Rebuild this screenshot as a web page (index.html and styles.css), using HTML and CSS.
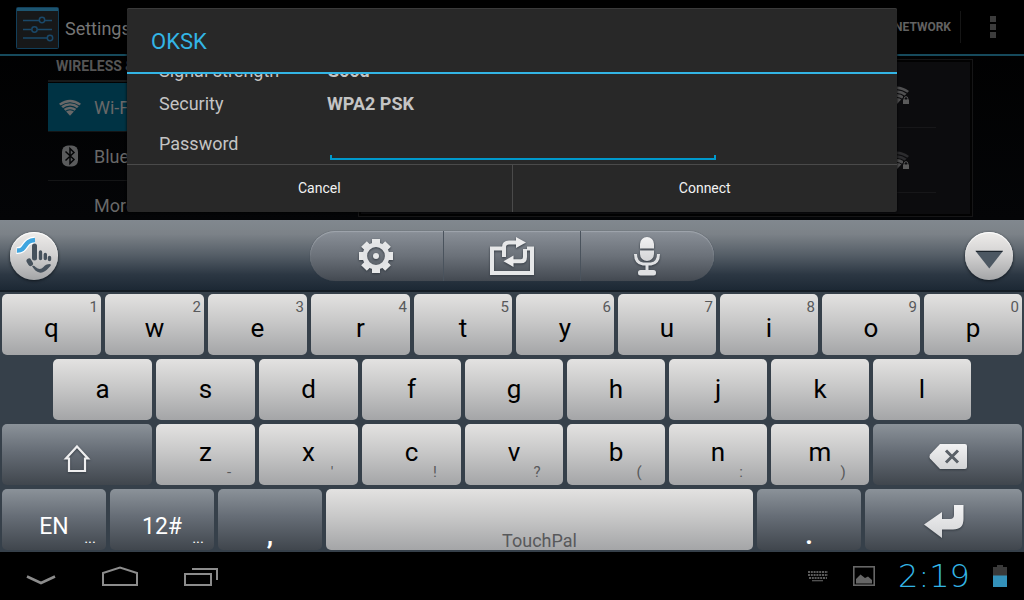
FILE: index.html
```html
<!DOCTYPE html>
<html lang="en">
<head>
<meta charset="utf-8">
<meta name="viewport" content="width=device-width, initial-scale=1">
<title>Settings</title>
<link rel="stylesheet" href="styles.css">
</head>
<body>
<svg class="defs" width="0" height="0" aria-hidden="true">
  <defs>
    <linearGradient id="metal" x1="0" y1="0" x2="0" y2="1">
      <stop offset="0" stop-color="#f2f2f3"/>
      <stop offset="1" stop-color="#d3d4d6"/>
    </linearGradient>
    <symbol id="wifi" viewBox="0 0 24 18">
      <path d="M0 5Q12-4 24 5L12 18Z" fill="currentColor"/>
      <path d="M1.500 7.500Q12 0 22.500 7.500M4 10.500Q12 4.500 20 10.500M6.500 13.500Q12 9.500 17.500 13.500" fill="none" stroke="var(--cut)" stroke-width="1.200"/>
    </symbol>
    <symbol id="lock" viewBox="0 0 6 8">
      <path d="M1.200 4V2.500a1.800 1.800 0 0 1 3.600 0V4" fill="none" stroke="currentColor"/>
      <path d="M0 3.500h6V8H0z" fill="currentColor"/>
    </symbol>
  </defs>
</svg>

<main class="app">
  <header class="action-bar">
    <svg class="app-icon" width="43" height="42" viewBox="0 0 43 42" aria-hidden="true">
      <rect x=".5" y=".5" width="42" height="41" rx="1" fill="#171819" stroke="#123f5a"/>
      <path d="M1 1h41v3H1z" fill="#1d5570"/>
      <g fill="none" stroke="#1a4869" stroke-width="1.500">
        <path d="M7 13.500h16M29 13.500h7M7 22.500h8M22 22.500h14M7 31h24"/>
        <circle cx="26" cy="13" r="2.700"/><circle cx="18.500" cy="22.500" r="2.700"/><circle cx="34" cy="31" r="2.700"/>
      </g>
    </svg>
    <h1 class="app-title">Settings</h1>
    <button class="add-network" type="button">ADD NETWORK</button>
    <button class="overflow" type="button" aria-label="More options"><span></span><span></span><span></span></button>
  </header>
  <div class="panes">
    <nav class="categories">
      <h2 class="category-title">WIRELESS &amp; NETWORKS</h2>
      <a class="category selected" href="#wifi-list"><svg width="22" height="17" aria-hidden="true"><use href="#wifi"/></svg><span>Wi-Fi</span></a>
      <a class="category" href="#bluetooth"><svg width="22" height="22" viewBox="0 0 22 22" aria-hidden="true"><rect x="3" y=".5" width="16" height="21" rx="6" fill="#5a5b5c"/><path d="M6.500 6.500l8.500 8-4 4V3.500l4 4-8.500 8" fill="none" stroke="#050607" stroke-width="1.500"/></svg><span>Bluetooth</span></a>
      <a class="category" href="#more"><svg width="22" height="22" aria-hidden="true"></svg><span>More…</span></a>
    </nav>
    <section class="networks" id="wifi-list" aria-label="Networks">
      <div class="network-list">
        <div class="network"><span class="signal"><svg width="24" height="18" aria-hidden="true"><use href="#wifi"/></svg><svg class="lock" width="6" height="8" aria-hidden="true"><use href="#lock"/></svg></span></div>
        <div class="network"><span class="signal weak"><svg width="24" height="18" aria-hidden="true"><use href="#wifi"/></svg><svg class="strength" width="24" height="18" viewBox="0 0 24 18" aria-hidden="true"><path d="M5 10.500Q12 5.500 19 10.500L12 18Z" fill="#505051"/><path d="M6.500 13.500Q12 9.500 17.500 13.500" fill="none" stroke="#0d0d0f"/></svg><svg class="lock" width="6" height="8" aria-hidden="true"><use href="#lock"/></svg></span></div>
      </div>
    </section>
  </div>

  <div class="modal-layer">
    <form class="dialog" role="dialog" aria-labelledby="ssid">
      <h2 class="dialog-title" id="ssid">OKSK</h2>
      <div class="dialog-body">
        <div class="field"><span class="label">Signal strength</span><strong>Good</strong></div>
        <div class="field"><span class="label">Security</span><strong>WPA2 PSK</strong></div>
        <div class="field password"><label class="label" for="password">Password</label><input id="password" type="password"></div>
      </div>
      <div class="dialog-actions">
        <button type="button">Cancel</button>
        <button type="button">Connect</button>
      </div>
    </form>
  </div>
</main>

<section class="keyboard" aria-label="Keyboard">
  <div class="toolbar">
    <button class="round" type="button" aria-label="TouchPal">
      <svg width="48" height="48" viewBox="0 0 48 48" aria-hidden="true">
        <path d="M6.500 18.500C17 19 13 8.500 25 8" fill="none" stroke="#fff" stroke-width="7"/>
        <path d="M7 18.500C17 19 13 8.500 25 8" fill="none" stroke="#3fa5df" stroke-width="4.500"/>
        <g stroke="#46515c" stroke-linecap="round" fill="none">
          <path d="M24.500 14v12" stroke-width="5"/>
          <path d="M30.500 20v6.500M35.300 22.500v4M39.500 25.500v2" stroke-width="3.400"/>
          <path d="M19 29l1.500 2.500" stroke-width="5"/>
        </g>
        <path d="M22 34q2-1 3.500 1 4.500 4 8 0 2-3 6.500-3 2 1-1 3.500-5 6-9.500 5T22 34z" fill="#46515c"/>
      </svg>
    </button>
    <div class="tools">
      <button type="button" aria-label="Keyboard settings">
        <svg width="34" height="34" viewBox="-17 -17 34 34" aria-hidden="true">
          <g fill="#e6e7e8">
            <path id="teeth" d="M-4-17H4L4-12H-4zM-4 12H4V17H-4z"/><use href="#teeth" transform="rotate(45)"/><use href="#teeth" transform="rotate(90)"/><use href="#teeth" transform="rotate(135)"/>
            <circle r="11.200" fill="none" stroke="#e2e3e5" stroke-width="4.600"/>
            <circle r="3"/>
          </g>
        </svg>
      </button>
      <button type="button" aria-label="Switch keyboard">
        <svg width="44" height="38" viewBox="0 0 44 38" aria-hidden="true">
          <g fill="none" stroke="#e6e7e8" stroke-width="4">
            <path d="M13 11.500H2V36H42V11.500H37"/><path d="M14 20V10Q14 5.500 19 5.500H27M35 12V20Q35 24.300 31 24.300H23"/>
          </g>
          <path d="M26 0L36 5.500 26 11zM13.500 24.300L23.500 18.500V30z" fill="#ececed"/>
        </svg>
      </button>
      <button type="button" aria-label="Voice input">
        <svg width="26" height="39" viewBox="0 0 26 39" aria-hidden="true">
          <path d="M6 11.500V7a7 7 0 0 1 14 0v4.500zM6 13.500h14V17a7 7 0 0 1-14 0z" fill="url(#metal)"/>
          <path d="M1.500 17q0 9 7.500 10h8q7.500-1 7.500-10M13 27v7" fill="none" stroke="#e0e1e3" stroke-width="3"/>
          <rect x="4" y="33" width="18" height="5.500" rx="2.500" fill="#e0e1e3"/>
        </svg>
      </button>
    </div>
    <button class="round" type="button" aria-label="Hide keyboard">
      <svg width="48" height="48" viewBox="0 0 48 48" aria-hidden="true"><path d="M10.500 19h27.500L24.300 36.500z" fill="#4c5762"/><path d="M10.500 18.700h27.500l-1 1.300H11.500z" fill="#1b232b"/></svg>
    </button>
  </div>

  <div class="keys">
    <div class="row top-row">
      <button class="key wide" type="button">q<small>1</small></button>
      <button class="key wide" type="button">w<small>2</small></button>
      <button class="key wide" type="button">e<small>3</small></button>
      <button class="key wide" type="button">r<small>4</small></button>
      <button class="key" type="button">t<small>5</small></button>
      <button class="key" type="button">y<small>6</small></button>
      <button class="key" type="button">u<small>7</small></button>
      <button class="key" type="button">i<small>8</small></button>
      <button class="key" type="button">o<small>9</small></button>
      <button class="key" type="button">p<small>0</small></button>
    </div>
    <div class="row home-row">
      <button class="key wide" type="button">a</button>
      <button class="key wide" type="button">s</button>
      <button class="key wide" type="button">d</button>
      <button class="key wide" type="button">f</button>
      <button class="key" type="button">g</button>
      <button class="key" type="button">h</button>
      <button class="key" type="button">j</button>
      <button class="key" type="button">k</button>
      <button class="key" type="button">l</button>
    </div>
    <div class="row lower-row">
      <button class="key dark shift" type="button" aria-label="Shift">
        <svg width="28" height="30" viewBox="0 0 28 30" aria-hidden="true"><path d="M14 2.500L25 14.500H22V27H6V14.500H3z" fill="none" stroke="#eeeeef" stroke-width="2.200"/></svg>
      </button>
      <button class="key wide" type="button">z<small>-</small></button>
      <button class="key wide" type="button">x<small>'</small></button>
      <button class="key wide" type="button">c<small>!</small></button>
      <button class="key" type="button">v<small>?</small></button>
      <button class="key" type="button">b<small>(</small></button>
      <button class="key" type="button">n<small>:</small></button>
      <button class="key" type="button">m<small>)</small></button>
      <button class="key dark backspace" type="button" aria-label="Backspace">
        <svg width="38" height="25" viewBox="0 0 38 25" aria-hidden="true"><path d="M11 0H36Q38 0 38 2V23Q38 25 36 25H11L1 14.500Q0 12.500 1 10.500z" fill="url(#metal)"/><path d="M17 6.500L29 18.500M29 6.500L17 18.500" stroke="#5a6067" stroke-width="3"/></svg>
      </button>
    </div>
    <div class="row bottom-row">
      <button class="key dark mode" type="button">EN<small>...</small></button>
      <button class="key dark mode" type="button">12#<small>...</small></button>
      <button class="key dark mode punctuation" type="button">,</button>
      <button class="key space" type="button">TouchPal</button>
      <button class="key dark mode punctuation" type="button">.</button>
      <button class="key dark enter" type="button" aria-label="Enter">
        <svg width="40" height="33" viewBox="0 0 40 33" aria-hidden="true"><path d="M0 19.500L18 7V14H26Q30 14 30 10V0H39.500V14Q39.500 24.500 29 24.500H18V33z" fill="url(#metal)"/></svg>
      </button>
    </div>
  </div>
</section>

<footer class="system-bar">
  <button type="button" aria-label="Back"><svg width="30" height="24" viewBox="0 0 30 24" aria-hidden="true"><path d="M1 12.500L15 19 29 12.500" fill="none" stroke="#8c8c8c" stroke-width="2.500"/></svg></button>
  <button type="button" aria-label="Home"><svg width="36" height="24" viewBox="0 0 36 24" aria-hidden="true"><path d="M1 21V9L18 3.500 35 9V21z" fill="none" stroke="#8c8c8c" stroke-width="2"/></svg></button>
  <button type="button" aria-label="Recent apps"><svg width="34" height="24" viewBox="0 0 34 24" aria-hidden="true"><path d="M1 10H27V21H1zM8 5H33V16" fill="none" stroke="#8c8c8c" stroke-width="2"/></svg></button>
  <div class="status">
    <div class="notifications">
      <svg width="20" height="12" viewBox="0 0 20 12" aria-hidden="true"><path d="M0 2h20M0 5h20M1 8h18" stroke="#5a5a5a" stroke-width="2" stroke-dasharray="2 .8"/><path d="M4 10.700h11" stroke="#5a5a5a" stroke-width="1.200"/></svg>
      <svg width="22" height="20" viewBox="0 0 22 20" aria-hidden="true"><rect x=".8" y=".8" width="20.400" height="18.400" fill="none" stroke="#666" stroke-width="1.600"/><path d="M3 17.500V13l4.500-4.500 4.500 3.500 3-1.500 4 3.500v3.500z" fill="#666"/></svg>
    </div>
    <time class="clock">2:19</time>
    <svg width="14" height="22" viewBox="0 0 14 22" aria-hidden="true"><path d="M4 0h6v2h4v9H0V2h4z" fill="#3a3a3a"/><path d="M0 10.500h14V22H0z" fill="#3492bb"/></svg>
  </div>
</footer>
</body>
</html>
```
FILE: styles.css
```css
* { box-sizing: border-box; }

body {
  margin: 0;
  min-height: 100vh;
  display: flex;
  flex-direction: column;
  background: #000;
  font-family: Roboto, "Noto Sans", sans-serif;
}

h1, h2 { margin: 0; font-weight: 400; }
svg { display: block; flex: none; }
.defs { position: absolute; }

button {
  margin: 0;
  padding: 0;
  border: 0;
  background: none;
  color: inherit;
  font: inherit;
}

/* Settings screen, dimmed behind the dialog */
.app {
  position: relative;
  flex: 1 0 220px;
  display: flex;
  flex-direction: column;
  overflow: hidden;
  background: linear-gradient(#000, #040507);
  color: #626262;
}

.action-bar {
  flex: none;
  display: flex;
  align-items: center;
  height: 56px;
  padding-left: 16px;
  background: #000;
  border-bottom: 2px solid #164a5c;
}
.app-icon { margin-top: 2px; }
.app-title { margin-left: 6px; padding-top: 2px; font-size: 18px; color: #757575; }
.add-network {
  margin-left: auto;
  padding-right: 9px;
  height: 32px;
  border-right: 1px solid #151515;
  font-size: 12px;
  font-weight: 700;
}
.overflow {
  display: grid;
  gap: 2px;
  justify-content: center;
  width: 63px;
}
.overflow span { width: 6px; height: 6px; background: #3c3c3c; }

.panes {
  flex: 1;
  min-height: 0;
  display: flex;
  gap: 15px;
  padding: 0 51px 0 48px;
}
.categories { flex: 0 0 295px; }
.category-title {
  margin-bottom: 1px;
  padding: 0 8px 4px;
  border-bottom: 2px solid #181919;
  font-size: 14px;
  font-weight: 700;
  line-height: 20px;
  color: #555;
}
.category {
  --cut: #050607;
  display: flex;
  align-items: center;
  gap: 13px;
  height: 49px;
  padding-left: 11px;
  border-bottom: 1px solid #141516;
  color: #686868;
  font-size: 18px;
  text-decoration: none;
}
.category.selected { --cut: #003344; background: #003344; }

.networks {
  flex: 1;
  margin: 3px 0;
  padding: 2px;
  border: 1px solid #161617;
  background: #020202;
}
.network-list { height: 100%; padding: 1px 34px 0; background: #0c0c0e; }
.network {
  display: flex;
  align-items: center;
  justify-content: flex-end;
  height: 65px;
  padding-right: 27px;
  border-bottom: 1px solid #171719;
}
.signal { --cut: #0d0d0f; position: relative; color: #505051; }
.signal.weak { color: #2c2c2e; }
.strength { position: absolute; inset: 0; }
.lock {
  position: absolute;
  right: 0;
  bottom: 0;
  color: #5a5a5a;
  background: #0c0c0e;
}

/* Dialog */
.modal-layer {
  position: absolute;
  inset: 0;
  display: flex;
  align-items: center;
  justify-content: center;
}
.dialog {
  width: calc(100% - 254px);
  background: #282828;
  border-radius: 2px;
  box-shadow: 0 0 3px #000, inset 0 1px #3a3a3a;
  overflow: hidden;
}
.dialog-title {
  padding: 4px 24px 0;
  border-bottom: 2px solid #33b5e5;
  color: #33b5e5;
  font-size: 22px;
  line-height: 60px;
}
.dialog-body {
  display: flex;
  flex-direction: column;
  justify-content: flex-end;
  height: 90px;
  overflow: hidden;
  padding: 0 32px;
  color: #c4c4c4;
  font-size: 18px;
  line-height: 33px;
}
.field { display: flex; flex: none; }
.label { flex: 0 0 168px; }
.password .label { line-height: 44px; padding-top: 2px; }
.password { height: 44px; }
.password input {
  flex: 0 1 386px;
  height: 40px;
  margin-left: 3px;
  padding: 0 8px;
  border: 0;
  outline: 0;
  color: #fff;
  font: inherit;
  background:
    linear-gradient(#0099cc, #0099cc) left bottom / 100% 2px no-repeat,
    linear-gradient(#0099cc, #0099cc) left bottom / 2px 5px no-repeat,
    linear-gradient(#0099cc, #0099cc) right bottom / 2px 5px no-repeat;
}
.dialog-actions { display: flex; border-top: 1px solid #4a4a4a; }
.dialog-actions button {
  flex: 1;
  height: 47px;
  padding-bottom: 2px;
  color: #f3f3f3;
  font-size: 14px;
}
.dialog-actions button + button { border-left: 1px solid #4a4a4a; }

/* Keyboard */
.keyboard { background: #36404a; }
.toolbar {
  display: flex;
  align-items: center;
  justify-content: space-between;
  height: 72px;
  padding: 2px 11px 0 10px;
  border-bottom: 2px solid #151d25;
  background: linear-gradient(#81888f, #7c8288 20%, #555e67 50%, #2c3743 78%, #1c2834);
}
.round {
  width: 48px;
  height: 48px;
  border-radius: 50%;
  background: linear-gradient(#eeecea, #d4d3d3 45%, #a4a5a7);
  box-shadow: 0 1px 3px #10161c, inset 0 1px 1px #fff;
}
.tools {
  display: flex;
  height: 50px;
  overflow: hidden;
  border-radius: 25px;
  background: linear-gradient(#8a9098, #6b7179 50%, #434951);
  box-shadow: inset 0 1px 1px #a0a6ad, 0 0 1px #333c46;
}
.tools button { display: grid; place-items: center; width: 133px; }
.tools button:nth-child(2) {
  width: 138px;
  border: solid #4a535d;
  border-width: 0 1px;
}
.tools svg, .key svg { filter: drop-shadow(0 1px 1px #333a42); }

.keys { display: grid; gap: 4px; padding: 2px; }
.row { display: flex; gap: 4px; }
.key {
  position: relative;
  display: flex;
  align-items: center;
  justify-content: center;
  flex: 98 1 0;
  min-width: 0;
  height: 61px;
  border-radius: 5px;
  background: linear-gradient(#e3e2e1, #c8c8c8 45%, #a4a5a7);
  color: #000;
  font-size: 26px;
}
.key.wide { flex-grow: 99; }
.key.dark {
  background: linear-gradient(#8b9299, #666d76 45%, #40464d);
  color: #fff;
}
.key small { position: absolute; color: #58595b; font-size: 15px; line-height: 18px; }

.top-row .key { padding-top: 7px; }
.top-row small { top: 4px; right: 3px; }
.home-row { padding: 0 5%; }
.home-row .key { padding-bottom: 2px; }
.lower-row .key { padding-bottom: 5px; }
.lower-row .shift { flex-grow: 150; padding: 8px 0 0; }
.lower-row .backspace { flex-grow: 149; padding: 3px 0 0; }
.lower-row small { right: 12px; bottom: 4px; width: 28px; }
.key.mode { flex-grow: 104; padding-top: 13px; font-size: 23px; }
.mode small { right: 10px; bottom: 3px; color: #fff; }
.key.punctuation { padding-top: 30px; font-size: 26px; font-weight: 700; }
.key.space { flex-grow: 427; padding-top: 42px; color: #58595b; font-size: 18px; }
.key.enter { flex-grow: 157; padding-top: 4px; }

/* System bar */
.system-bar {
  display: flex;
  align-items: center;
  gap: 46px;
  height: 48px;
  padding: 0 17px 0 26px;
}
.status { display: flex; align-items: center; gap: 18px; margin-left: auto; }
.notifications { display: flex; align-items: center; gap: 25px; }
.clock {
  min-width: 82px;
  color: #33b5e5;
  font-family: "DejaVu Sans Light", "DejaVu Sans ExtraLight", "DejaVu Sans", sans-serif;
  font-size: 32px;
  font-weight: 200;
  line-height: 48px;
  text-align: center;
}
```
